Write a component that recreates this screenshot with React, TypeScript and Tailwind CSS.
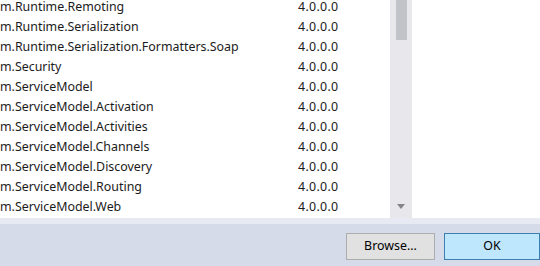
const rows = [
  "m.Runtime.Remoting",
  "m.Runtime.Serialization",
  "m.Runtime.Serialization.Formatters.Soap",
  "m.Security",
  "m.ServiceModel",
  "m.ServiceModel.Activation",
  "m.ServiceModel.Activities",
  "m.ServiceModel.Channels",
  "m.ServiceModel.Discovery",
  "m.ServiceModel.Routing",
  "m.ServiceModel.Web",
];

export default function App() {
  return (
    <div
      className="w-[540px] h-[266px] overflow-hidden bg-[#d6dbe9] flex flex-col text-[12.4px] text-[#1b1b1b]"
      style={{ fontFamily: '"Segoe UI", "Noto Sans", "Open Sans", sans-serif' }}
    >
      <div className="h-[218px] flex bg-white">
        <div className="w-[390px] overflow-hidden">
          <div className="-mt-[3px]">
            {rows.map((name) => (
              <div key={name} className="h-[20px] leading-[20px] flex">
                <div className="w-[298px] whitespace-nowrap">{name}</div>
                <div className="tracking-[0.3px]">4.0.0.0</div>
              </div>
            ))}
          </div>
        </div>
        <div className="w-[22px] bg-[#e8e8ec] flex flex-col items-center justify-between pb-[9px]">
          <div className="w-[11px] h-[40px] bg-[#c2c3c9]" />
          <svg width="8" height="5" viewBox="0 0 8 5">
            <path d="M0 0h8L4 5z" fill="#858589" />
          </svg>
        </div>
        <div className="flex-1 bg-white" />
      </div>
      <div className="h-[6px] bg-[#e7e9f3]" />
      <div className="flex items-start pt-[9px] pl-[346px] gap-[9px]">
        <button className="w-[93px] h-[27px] bg-[#e1e1e1] border border-[#adadad] text-[12.4px] text-black">
          Browse...
        </button>
        <button className="w-[96px] h-[27px] shrink-0 bg-[#bee6fd] border border-[#3c7fb1] text-[12.4px] text-black">
          OK
        </button>
      </div>
    </div>
  );
}
